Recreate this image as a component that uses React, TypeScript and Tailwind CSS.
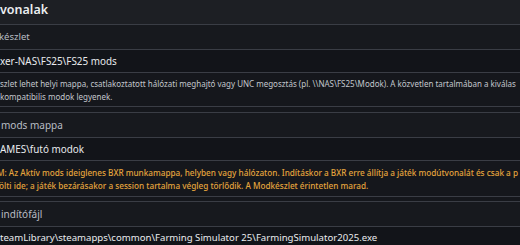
import React from "react";

const font = { fontFamily: '"Noto Sans", "Open Sans", sans-serif' };

function Border() {
  return <div className="h-px bg-[#3a3d45]" />;
}

export default function App() {
  return (
    <div
      className="w-[520px] h-[245px] overflow-hidden bg-[#15171c] text-[#e6e8eb] whitespace-nowrap"
      style={font}
    >
      {/* Section header */}
      <div className="h-[24px] bg-[#1d1f24] flex items-center pb-[3px]">
        <span className="text-[12.5px] font-semibold text-[#eceef1] leading-none">vonalak</span>
      </div>
      <Border />

      {/* Card 1 */}
      <div className="h-[24px] flex items-center bg-[#17191e]">
        <span className="text-[9.5px] text-[#b9bdc4] -ml-[1px]">készlet</span>
      </div>
      <Border />
      <div className="h-[22px] flex items-center bg-[#121419]">
        <span className="text-[9.9px] text-[#e9ebee]">xer-NAS\FS25\FS25 mods</span>
      </div>
      <Border />
      <div className="h-[33px] flex flex-col justify-center bg-[#15171c] text-[8px] leading-[13px] text-[#c3c7cd]">
        <span>szlet lehet helyi mappa, csatlakoztatott hálózati meghajtó vagy UNC megosztás (pl. \\NAS\FS25\Modok). A közvetlen tartalmában a kiválas</span>
        <span>kompatibilis modok legyenek.</span>
      </div>
      <Border />
      <div className="h-[5px] bg-[#15171c]" />
      <Border />

      {/* Card 2 */}
      <div className="h-[24px] flex items-center bg-[#17191e]">
        <span className="text-[10px] text-[#b9bdc4] ml-[1px]">mods mappa</span>
      </div>
      <Border />
      <div className="h-[22px] flex items-center bg-[#121419]">
        <span className="text-[9.9px] text-[#e9ebee]">AMES\futó modok</span>
      </div>
      <Border />
      <div className="h-[35px] flex flex-col justify-center bg-[#15171c] text-[8.2px] leading-[13px] text-[#e4a43c] font-medium">
        <span className="-ml-[3px]">M: Az Aktív mods ideiglenes BXR munkamappa, helyben vagy hálózaton. Indításkor a BXR erre állítja a játék modútvonalát és csak a p</span>
        <span className="-ml-[1px]">ölti ide; a játék bezárásakor a session tartalma végleg törlődik. A Modkészlet érintetlen marad.</span>
      </div>
      <Border />
      <div className="h-[4px] bg-[#15171c]" />
      <Border />

      {/* Card 3 */}
      <div className="h-[24px] flex items-center bg-[#17191e]">
        <span className="text-[10px] text-[#b9bdc4] ml-[1px]">indítófájl</span>
      </div>
      <Border />
      <div className="h-[22px] flex items-center bg-[#121419]">
        <span className="text-[9.6px] text-[#e9ebee]">teamLibrary\steamapps\common\Farming Simulator 25\FarmingSimulator2025.exe</span>
      </div>
    </div>
  );
}
